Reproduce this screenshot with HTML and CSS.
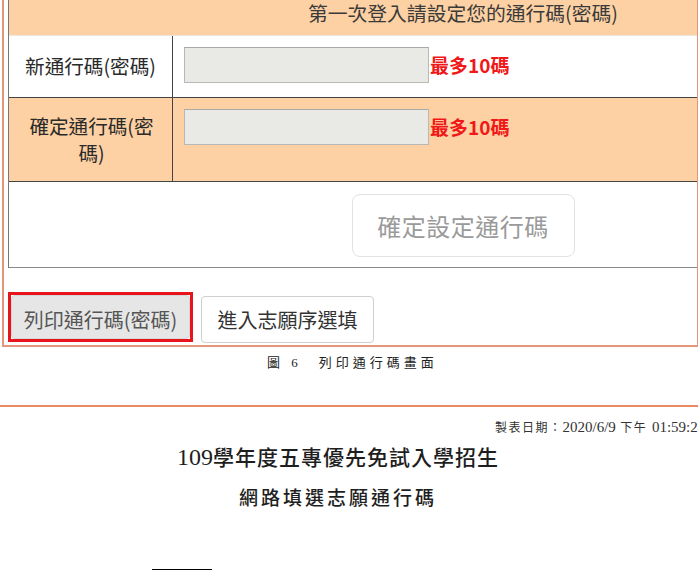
FILE: index.html
```html
<!DOCTYPE html>
<html lang="zh-Hant">
<head>
<meta charset="utf-8">
<title>列印通行碼</title>
<link rel="stylesheet" href="styles.css">
</head>
<body>
  <div class="panel">
    <div class="form">
      <div class="form-head">第一次登入請設定您的通行碼(密碼)</div>
      <div class="form-row row-white">
        <div class="label">新通行碼(密碼)</div>
        <div class="field"><input class="pwd" type="password"><span class="hint">最多10碼</span></div>
      </div>
      <div class="form-row row-peach">
        <div class="label label-wrap">確定通行碼(密碼)</div>
        <div class="field"><input class="pwd" type="password"><span class="hint">最多10碼</span></div>
      </div>
      <div class="form-submit">
        <button class="btn-submit" type="button">確定設定通行碼</button>
      </div>
    </div>
    <div class="actions">
      <div class="mark"><button class="btn btn-print" type="button">列印通行碼(密碼)</button></div>
      <button class="btn btn-next" type="button">進入志願序選填</button>
    </div>
  </div>
  <p class="caption">圖 6　列印通行碼畫面</p>
  <div class="sep"></div>
  <div class="report">
    <div class="stamp">製表日期：<span class="num">2020/6/9</span> 下午 <span class="num">01:59:24</span></div>
    <h1 class="r-title"><span class="num">109</span>學年度五專優先免試入學招生</h1>
    <h2 class="r-sub">網路填選志願通行碼</h2>
    <div class="r-block"></div>
  </div>
</body>
</html>
```

FILE: styles.css
```css
html, body {
  margin: 0;
  padding: 0;
  background: #fff;
}
body {
  width: 698px;
  height: 570px;
  overflow: hidden;
  font-family: "Noto Sans CJK TC", "Liberation Sans", sans-serif;
  color: #333;
}

/* outer page frame */
.panel {
  margin-left: 2px;
  width: 689px;
  border: 2px solid #e3967a;
  border-top: none;
  padding: 0 0 3px 4px;
}

.form {
  border-left: 1px solid #777;
}

.form-head {
  height: 35px;
  background: #fdd1a3;
  border-bottom: 1px solid #ebe6e0;
  padding-left: 220px;
  text-align: center;
  font-size: 19.8px;
  line-height: 26px;
  color: #3a3a3a;
}

.form-row {
  display: grid;
  grid-template-columns: 164px 1fr;
  border-bottom: 1px solid #444;
}
.row-white { height: 61px; background: #fff; }
.row-peach { height: 83px; background: #fdd1a3; }

.label {
  border-right: 1px solid #444;
  display: flex;
  align-items: center;
  justify-content: center;
  text-align: center;
  font-size: 19.6px;
  line-height: 27px;
  color: #2a2a2a;
  padding: 0 8px 3px;
}
.label-wrap {
  padding: 0 12px 2px 14px;
}

.field {
  display: flex;
  align-items: center;
  align-self: start;
  padding: 11px 0 0 11px;
}
.pwd {
  box-sizing: border-box;
  width: 245px;
  height: 36px;
  margin: 0;
  background: #e9e9e5;
  border: 1px solid #b8b8b4;
  border-top-color: #a9a9a6;
}
.hint {
  margin-left: 1px;
  color: #f01818;
  font-weight: bold;
  font-size: 19px;
  line-height: 24px;
}

.form-submit {
  height: 86px;
  border-bottom: 1px solid #8a8a8a;
  display: flex;
  justify-content: center;
  align-items: flex-start;
  padding-left: 220px;
  box-sizing: border-box;
  padding-top: 12px;
}
.btn-submit {
  width: 223px;
  height: 63px;
  background: #fff;
  border: 1px solid #e2e2e2;
  border-radius: 8px;
  font-family: inherit;
  font-size: 24px;
  color: #9a9a9a;
  letter-spacing: 0.5px;
}

.actions {
  display: flex;
  align-items: flex-end;
  gap: 8px;
  margin-top: 24px;
}
.mark {
  border: 3px solid #e8141c;
  width: 179px;
  height: 44px;
}
.btn {
  font-family: inherit;
  font-size: 20px;
  border-radius: 4px;
  padding: 0;
}
.btn-print {
  width: 100%;
  height: 100%;
  background: #e6e6e6;
  border: 1px solid #d6d6d6;
  color: #555;
  padding-top: 4px;
}
.btn-next {
  width: 173px;
  height: 47px;
  background: #fff;
  border: 1px solid #cfcfcf;
  color: #333;
  margin-bottom: -1px;
}

.caption {
  margin: 6px 0 0;
  padding-left: 267px;
  font-family: "Liberation Serif", "Noto Sans CJK TC", serif;
  font-size: 13px;
  line-height: 20px;
  letter-spacing: 4px;
  color: #222;
}

.sep {
  margin-top: 32px;
  height: 2px;
  background: #ea8a64;
}

.report {
  font-family: "Liberation Serif", "Noto Sans CJK TC", serif;
  color: #1e1e1e;
}
.num {
  font-family: "Liberation Serif", serif;
}
.stamp {
  margin-top: 11px;
  padding-left: 495px;
  white-space: nowrap;
  font-size: 12px;
  line-height: 18px;
  letter-spacing: 1.5px;
  color: #333;
}
.stamp .num {
  font-size: 15px;
  letter-spacing: 0;
}
.r-title {
  margin: 5px 0 0;
  padding-right: 22px;
  text-align: center;
  font-size: 21px;
  font-weight: 500;
  letter-spacing: 1px;
  line-height: 30px;
}
.r-title .num {
  font-size: 24px;
  letter-spacing: 0;
}
.r-sub {
  margin: 11px 0 0;
  padding-right: 22px;
  text-align: center;
  font-size: 19px;
  font-weight: 500;
  letter-spacing: 3px;
  line-height: 30px;
}
.r-block {
  margin: 55px 0 0 152px;
  width: 60px;
  height: 4px;
  background: #000;
}
```
